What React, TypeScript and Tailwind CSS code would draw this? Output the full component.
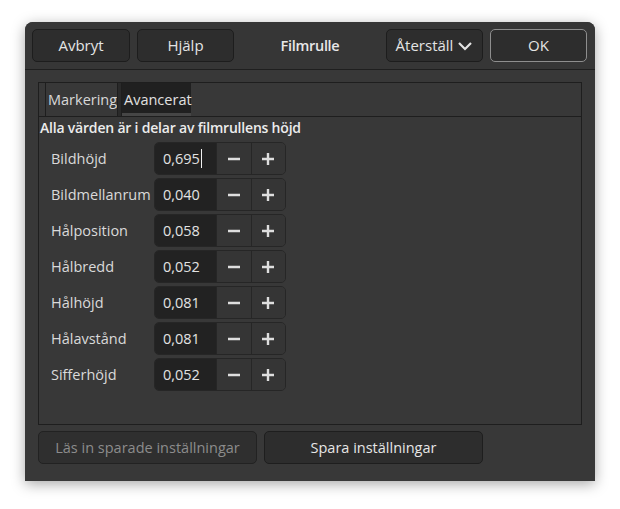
import { useState } from "react";

const rows = [
  { label: "Bildhöjd", value: "0,695", focused: true },
  { label: "Bildmellanrum", value: "0,040" },
  { label: "Hålposition", value: "0,058" },
  { label: "Hålbredd", value: "0,052" },
  { label: "Hålhöjd", value: "0,081" },
  { label: "Hålavstånd", value: "0,081" },
  { label: "Sifferhöjd", value: "0,052" },
];

const font = { fontFamily: '"Open Sans", "Noto Sans", sans-serif' };

function HeaderButton({ children, className = "" }: { children: React.ReactNode; className?: string }) {
  return (
    <button
      className={`h-[33px] w-[97px] rounded-[5px] border bg-[#2d2d2d] text-[15px] text-[#e4e4e4] flex items-center justify-center ${className}`}
    >
      {children}
    </button>
  );
}

function Minus() {
  return (
    <svg width="14" height="14" viewBox="0 0 14 14">
      <path d="M1 7h12" stroke="#dedede" strokeWidth="2.4" />
    </svg>
  );
}

function Plus() {
  return (
    <svg width="14" height="14" viewBox="0 0 14 14">
      <path d="M1 7h12M7 1v12" stroke="#dedede" strokeWidth="2.4" />
    </svg>
  );
}

function SpinRow({ label, value, focused }: { label: string; value: string; focused?: boolean }) {
  return (
    <div className="flex items-center h-[33px]">
      <div className="w-[103px] text-[14.5px] text-[#dadada]">{label}</div>
      <div className="flex h-[33px] w-[132px] rounded-[5px] border border-[#262626] overflow-hidden">
        <div className="w-[62px] bg-[#222222] flex items-center pl-[8px] text-[14.5px] text-[#e2e2e2]">
          {value}
          {focused && <span className="ml-[1px] h-[19px] w-[1px] bg-[#f0f0f0]" />}
        </div>
        <button className="w-[35px] bg-[#353535] border-l border-[#262626] flex items-center justify-center">
          <Minus />
        </button>
        <button className="w-[35px] bg-[#353535] border-l border-[#262626] flex items-center justify-center">
          <Plus />
        </button>
      </div>
    </div>
  );
}

export default function App() {
  const [tab] = useState("Avancerat");

  return (
    <div className="w-[620px] h-[509px] bg-white pt-[22px] pl-[25px]" style={font}>
      <div className="w-[570px] h-[459px] bg-[#383838] rounded-t-[8px] shadow-[0_3px_14px_rgba(0,0,0,0.35)] flex flex-col">
        {/* header bar */}
        <div className="h-[48px] shrink-0 border-b border-[#1f1f1f] flex items-center pl-[7px] pr-[8px] rounded-t-[8px] bg-[#363636]">
          <HeaderButton className="w-[98px] border-[#1d1d1d]">Avbryt</HeaderButton>
          <HeaderButton className="ml-[7px] w-[96px] border-[#1d1d1d]">Hjälp</HeaderButton>
          <div className="flex-1 text-center text-[14.5px] font-semibold tracking-[-0.3px] text-[#e8e8e8]">Filmrulle</div>
          <HeaderButton className="border-[#1d1d1d] gap-[4px]">
            Återställ
            <svg width="16" height="12" viewBox="0 0 16 12">
              <path d="M2 3l6 6 6-6" fill="none" stroke="#e4e4e4" strokeWidth="2.2" />
            </svg>
          </HeaderButton>
          <HeaderButton className="ml-[7px] border-[#8e8e8e]">OK</HeaderButton>
        </div>

        {/* body */}
        <div className="flex-1 flex flex-col px-[13px] pt-[12px]">
          <div className="h-[343px] border border-[#1e1e1e] flex flex-col">
            <div className="h-[34px] shrink-0 flex border-b border-[#1e1e1e]">
              <div className="w-[7px] border-r border-[#1e1e1e]" />
              <div className="w-[71px] flex items-center pl-[2px] text-[14.5px] text-[#d8d8d8] bg-[#383838]">
                Markering
              </div>
              <div className="w-[5px] bg-[#2a2a2a] border-x border-[#1e1e1e]" />
              <div
                className={`w-[69px] flex items-center pl-[2px] text-[14.5px] text-[#e0e0e0] ${
                  tab === "Avancerat" ? "bg-[#202020] border-b-[3px] border-[#464646] pt-[3px]" : ""
                }`}
              >
                Avancerat
              </div>
            </div>
            <div className="flex-1 flex flex-col">
              <div className="h-[20px] pl-[1px] flex items-center text-[14px] font-semibold tracking-[-0.2px] text-[#ececec]">
                Alla värden är i delar av filmrullens höjd
              </div>
              <div className="flex flex-col gap-[3px] pl-[12px] pt-[5px]">
                {rows.map((r) => (
                  <SpinRow key={r.label} {...r} />
                ))}
              </div>
            </div>
          </div>
          <div className="flex gap-[7px] mt-[6px]">
            <button className="h-[33px] w-[219px] rounded-[5px] border border-[#222222] bg-[#2f2f2f] text-[14.5px] text-[#8c8c8c]">
              Läs in sparade inställningar
            </button>
            <button className="h-[33px] w-[219px] rounded-[5px] border border-[#1e1e1e] bg-[#2d2d2d] text-[14.5px] text-[#e6e6e6]">
              Spara inställningar
            </button>
          </div>
        </div>
      </div>
    </div>
  );
}
